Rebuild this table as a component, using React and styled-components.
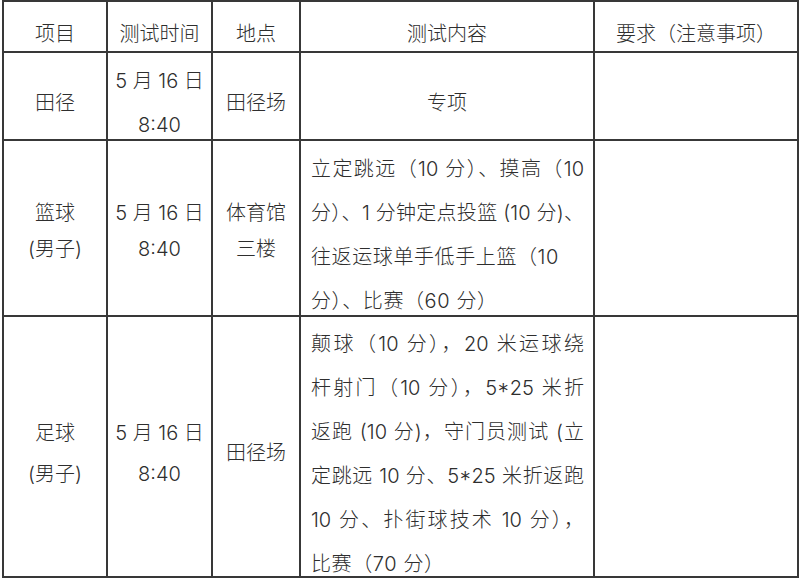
import React from "react";
import styled, { createGlobalStyle } from "styled-components";

const GlobalStyle = createGlobalStyle`
  html, body {
    margin: 0;
    padding: 0;
    background: #ffffff;
  }
  body {
    font-family: "Inter", "Noto Sans CJK SC", sans-serif;
    font-weight: 300;
    color: #2e2e2e;
  }
`;

const Sheet = styled.div`
  margin: 0 0 0 2px;
  width: 797px;
  display: grid;
  grid-template-columns: 102px 103px 86px 292px 202px;
  grid-template-rows: 49px 86px 174px 259px;
  gap: 2px;
  padding: 2px;
  box-sizing: border-box;
  background: #383838;
`;

const Cell = styled.div`
  background: #ffffff;
  display: flex;
  flex-direction: column;
  align-items: ${(p) => (p.left ? "stretch" : "center")};
  justify-content: center;
  box-sizing: border-box;
  padding: ${(p) => p.shift ?? 14}px ${(p) => (p.left ? 9 : 0)}px 0
    ${(p) => (p.left ? 10 : 0)}px;
  font-size: 20px;
  line-height: ${(p) => p.lh ?? 44}px;
  text-align: center;
`;

const Line = styled.span`
  display: block;
  white-space: nowrap;
`;

const JustLine = styled.span`
  display: block;
  text-align: justify;
  text-align-last: ${(p) => (p.plain ? "left" : "justify")};
  letter-spacing: ${(p) => (p.plain ? "0.6px" : "0")};
  white-space: normal;
`;

const rows = [
  {
    item: ["田径"],
    time: ["5 月 16 日", "8:40"],
    place: ["田径场"],
    content: ["专项"],
    centered: true,
  },
  {
    item: ["篮球", "(男子)"],
    time: ["5 月 16 日", "8:40"],
    place: ["体育馆", "三楼"],
    content: [
      "立定跳远（10 分）、摸高（10",
      "分）、1 分钟定点投篮 (10 分)、",
      { t: "往返运球单手低手上篮（10", plain: true },
      { t: "分）、比赛（60 分）", plain: true },
    ],
    lh: 36,
    shift: 6,
  },
  {
    item: ["足球", "(男子)"],
    time: ["5 月 16 日", "8:40"],
    place: ["田径场"],
    content: [
      "颠球（10 分），20 米运球绕",
      "杆射门（10 分），5*25 米折",
      "返跑 (10 分)，守门员测试 (立",
      "定跳远 10 分、5*25 米折返跑",
      "10 分、扑街球技术 10 分），",
      { t: "比赛（70 分）", plain: true },
    ],
    lh: 41,
  },
];

const lines = (arr) => arr.map((t, i) => <Line key={i}>{t}</Line>);

const paragraph = (arr) =>
  arr.map((l, i) => {
    const { t, plain } = typeof l === "string" ? { t: l } : l;
    return (
      <JustLine key={i} lang="zh-CN" plain={plain}>
        {t}
      </JustLine>
    );
  });

export default function App() {
  return (
    <>
      <GlobalStyle />
      <Sheet>
        <Cell>项目</Cell>
        <Cell>测试时间</Cell>
        <Cell>地点</Cell>
        <Cell>测试内容</Cell>
        <Cell>要求（注意事项）</Cell>
        {rows.map((r, i) => (
          <React.Fragment key={i}>
            <Cell lh={r.lh} shift={r.shift}>{lines(r.item)}</Cell>
            <Cell lh={r.lh} shift={r.shift}>{lines(r.time)}</Cell>
            <Cell lh={r.lh} shift={r.shift}>{lines(r.place)}</Cell>
            {r.centered ? (
              <Cell>{lines(r.content)}</Cell>
            ) : (
              <Cell left>{paragraph(r.content)}</Cell>
            )}
            <Cell />
          </React.Fragment>
        ))}
      </Sheet>
    </>
  );
}
